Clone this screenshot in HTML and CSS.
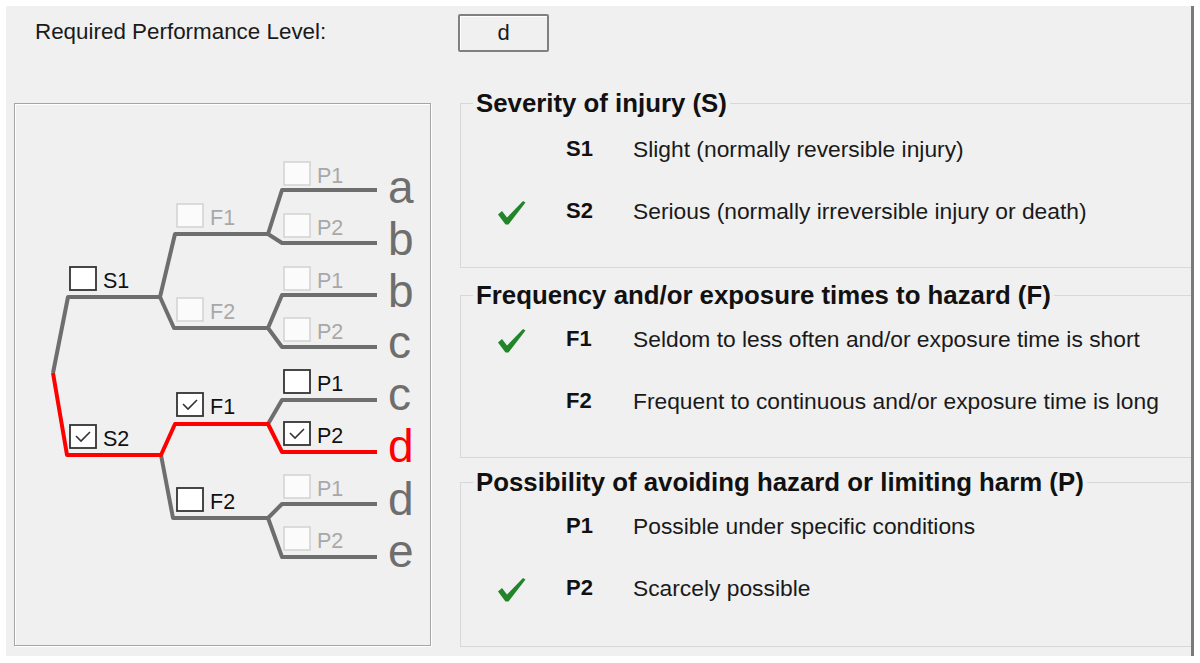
FILE: index.html
```html
<!DOCTYPE html>
<html lang="en">
  <head>
    <meta charset="UTF-8" />
    <meta name="viewport" content="width=device-width, initial-scale=1.0" />
    <title>Performance Level</title>
    <link rel="stylesheet" href="styles.css">
  </head>
  <body>
    <div class="window">
      <div class="top">
        <span class="top-label">Required Performance Level:</span>
        <output class="level">d</output>
      </div>

      <div class="main">
        <!-- risk graph -->
        <div class="tree">
          <svg class="graph" viewBox="15 104 415 541" width="415" height="541">
            <g class="wire">
              <polyline points="160,297 68,297 53,373" />
              <polyline points="268,234 175,234 160,297 174,328 268,328" />
              <polyline points="377,190 282,190 268,234 282,243 377,243" />
              <polyline points="377,295 282,295 268,328 282,347 377,347" />
              <polyline points="161,455 173,518 268,518" />
              <polyline points="268,424 282,400 377,400" />
              <polyline points="377,504 282,504 268,518 282,557 377,557" />
            </g>
            <polyline class="wire hot" points="53,373 67,455 161,455 175,424 268,424 282,452 377,452" />

            <g class="leaf">
              <text x="388" y="203">a</text>
              <text x="388" y="255">b</text>
              <text x="388" y="307">b</text>
              <text x="388" y="358">c</text>
              <text x="388" y="410">c</text>
              <text x="388" y="462" class="hot">d</text>
              <text x="388" y="515">d</text>
              <text x="388" y="567">e</text>
            </g>

            <g class="opt" transform="translate(70 267)"><rect width="26" height="23" /><text x="33" y="21">S1</text></g>
            <g class="opt" transform="translate(70 425)"><rect width="26" height="23" /><path class="tick" d="M6 11l5 5 9-9" /><text x="33" y="21">S2</text></g>

            <g class="opt off" transform="translate(177 204)"><rect width="26" height="23" /><text x="33" y="21">F1</text></g>
            <g class="opt off" transform="translate(177 298)"><rect width="26" height="23" /><text x="33" y="21">F2</text></g>
            <g class="opt" transform="translate(177 393)"><rect width="26" height="23" /><path class="tick" d="M6 11l5 5 9-9" /><text x="33" y="21">F1</text></g>
            <g class="opt" transform="translate(177 488)"><rect width="26" height="23" /><text x="33" y="21">F2</text></g>

            <g class="opt off" transform="translate(284 162)"><rect width="26" height="23" /><text x="33" y="21">P1</text></g>
            <g class="opt off" transform="translate(284 214)"><rect width="26" height="23" /><text x="33" y="21">P2</text></g>
            <g class="opt off" transform="translate(284 267)"><rect width="26" height="23" /><text x="33" y="21">P1</text></g>
            <g class="opt off" transform="translate(284 318)"><rect width="26" height="23" /><text x="33" y="21">P2</text></g>
            <g class="opt" transform="translate(284 370)"><rect width="26" height="23" /><text x="33" y="21">P1</text></g>
            <g class="opt" transform="translate(284 422)"><rect width="26" height="23" /><path class="tick" d="M6 11l5 5 9-9" /><text x="33" y="21">P2</text></g>
            <g class="opt off" transform="translate(284 475)"><rect width="26" height="23" /><text x="33" y="21">P1</text></g>
            <g class="opt off" transform="translate(284 527)"><rect width="26" height="23" /><text x="33" y="21">P2</text></g>
          </svg>
        </div>

        <div class="groups">
          <fieldset class="group">
            <legend>Severity of injury (S)</legend>
            <div class="row">
              <span class="mark"></span>
              <b>S1</b>
              <span>Slight (normally reversible injury)</span>
            </div>
            <div class="row">
              <span class="mark"><svg width="29" height="25" viewBox="0 0 29 25"><path d="M1 14.5L5 11l5 6.5L26 1l2.5 1.5L11.5 24.5H8.5z" /></svg></span>
              <b>S2</b>
              <span>Serious (normally irreversible injury or death)</span>
            </div>
          </fieldset>

          <fieldset class="group group-f">
            <legend>Frequency and/or exposure times to hazard (F)</legend>
            <div class="row">
              <span class="mark"><svg width="29" height="25" viewBox="0 0 29 25"><path d="M1 14.5L5 11l5 6.5L26 1l2.5 1.5L11.5 24.5H8.5z" /></svg></span>
              <b>F1</b>
              <span>Seldom to less often and/or exposure time is short</span>
            </div>
            <div class="row">
              <span class="mark"></span>
              <b>F2</b>
              <span>Frequent to continuous and/or exposure time is long</span>
            </div>
          </fieldset>

          <fieldset class="group group-p">
            <legend>Possibility of avoiding hazard or limiting harm (P)</legend>
            <div class="row">
              <span class="mark"></span>
              <b>P1</b>
              <span>Possible under specific conditions</span>
            </div>
            <div class="row">
              <span class="mark"><svg width="29" height="25" viewBox="0 0 29 25"><path d="M1 14.5L5 11l5 6.5L26 1l2.5 1.5L11.5 24.5H8.5z" /></svg></span>
              <b>P2</b>
              <span>Scarcely possible</span>
            </div>
          </fieldset>
        </div>
      </div>
    </div>
  </body>
</html>
```

FILE: styles.css
```css
body,
html {
  margin: 0;
  background-color: #fff;
}

body {
  font-family: "Liberation Sans", Arial, sans-serif;
  color: #1a1a1a;
}

.window {
  margin: 6px 0 0 6px;
  width: 1185px;
  height: 650px;
  background-color: #f0f0f0;
  border-right: 3px solid #7a7a7a;
}

.top {
  display: flex;
  align-items: flex-start;
  height: 97px;
  box-sizing: border-box;
  padding: 8px 0 0 29px;
}

.top-label {
  width: 423px;
  margin-top: 5px;
  font-size: 22.4px;
}

.level {
  width: 91px;
  height: 38px;
  box-sizing: border-box;
  border: 2px solid #808080;
  border-radius: 2px;
  box-shadow: inset 1px 1px 0 #fff;
  display: flex;
  align-items: center;
  justify-content: center;
  font-size: 22px;
}

.main {
  display: grid;
  grid-template-columns: 417px 1fr;
  column-gap: 29px;
  padding-left: 8px;
}

/* left graph */
.tree {
  height: 543px;
  box-sizing: border-box;
  border: 1px solid #a5a5a5;
  box-shadow: inset 1px 1px 0 #fff, 1px 1px 0 #fff;
}

.graph {
  display: block;
}

.wire {
  fill: none;
  stroke: #6e6e6e;
  stroke-width: 4;
  stroke-linejoin: round;
}

.wire.hot {
  stroke: #ff0000;
}

.leaf {
  font-family: "Liberation Sans", Arial, sans-serif;
  font-size: 46px;
  fill: #6e6e6e;
}

.leaf .hot {
  fill: #ff0000;
}

.opt rect {
  fill: #fff;
  stroke: #333;
  stroke-width: 1.8;
}

.opt text {
  font-family: "Liberation Sans", Arial, sans-serif;
  font-size: 21.5px;
  fill: #111;
}

.opt .tick {
  fill: none;
  stroke: #333;
  stroke-width: 1.6;
}

.opt.off rect {
  fill: #fbfbfb;
  stroke: #d2d2d2;
  stroke-width: 1.5;
}

.opt.off text {
  fill: #a8a8a8;
}

/* right groups */
.groups {
  display: flex;
  flex-direction: column;
  margin-top: -13px;
}

.group {
  margin: 0;
  padding: 2px 0 25px;
  min-width: 0;
  border: 1px solid #d8d8d8;
  border-right: none;
}

.group-f {
  margin-top: 14px;
  padding-top: 0;
}

.group-p {
  margin-top: 11px;
  padding-top: 0;
  padding-bottom: 27px;
}

.group legend {
  margin-left: 12px;
  padding: 0 3px;
  font-size: 25.8px;
  line-height: 26px;
  font-weight: bold;
  color: #111;
}

.row {
  display: grid;
  grid-template-columns: 69px 67px 1fr;
  align-items: center;
  height: 62px;
  padding-left: 36px;
  font-size: 22.8px;
}

.row b {
  color: #111;
  font-size: 22px;
}

.mark {
  display: flex;
  padding-top: 3px;
}

.mark path {
  fill: #23852a;
}
```
